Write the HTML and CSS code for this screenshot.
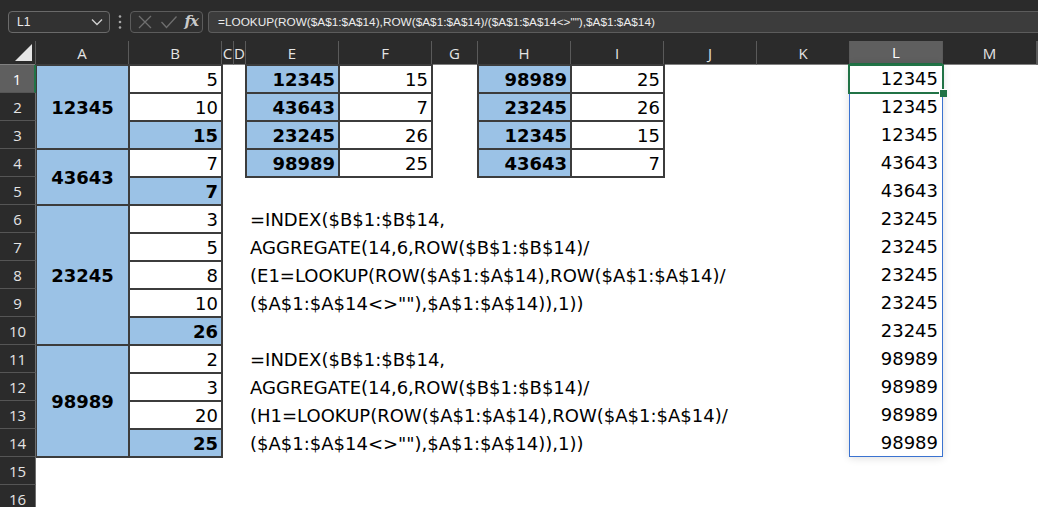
FILE: index.html
```html
<!DOCTYPE html>
<html lang="en">
<head>
    <meta charset="UTF-8">
    <meta name="viewport" content="width=device-width, initial-scale=1.0">
    <title>Book1 - Excel</title>
    <link rel="stylesheet" href="styles.css">
</head>
<body>
    <div class="toolbar">
        <div class="namebox">
            <span>L1</span>
            <svg width="12" height="8" viewBox="0 0 12 8"><path d="M1 1.5 L6 6.5 L11 1.5" fill="none" stroke="#cfcfcf" stroke-width="1.4"/></svg>
        </div>
        <div class="grip">
            <svg width="4" height="16" viewBox="0 0 4 16"><circle cx="2" cy="2.5" r="1.3" fill="#a8a8a8"/><circle cx="2" cy="8" r="1.3" fill="#a8a8a8"/><circle cx="2" cy="13.5" r="1.3" fill="#a8a8a8"/></svg>
        </div>
        <div class="fxbox">
            <svg width="16" height="16" viewBox="0 0 16 16"><path d="M2 2 L14 14 M14 2 L2 14" stroke="#6f6f6f" stroke-width="1.3"/></svg>
            <svg width="18" height="16" viewBox="0 0 18 16"><path d="M1.5 8 L6.5 13.5 L16.5 2.5" fill="none" stroke="#6f6f6f" stroke-width="1.3"/></svg>
            <span class="fx">fx</span>
        </div>
        <div class="formula">=LOOKUP(ROW($A$1:$A$14),ROW($A$1:$A$14)/($A$1:$A$14&lt;&gt;""),$A$1:$A$14)</div>
    </div>

    <div class="sheet">
        <div class="corner">
            <svg width="17" height="17" viewBox="0 0 17 17"><path d="M17 0 L17 17 L0 17 Z" fill="#e6e6e6"/></svg>
        </div>
        <div class="colhead">A</div>
        <div class="colhead">B</div>
        <div class="colhead">C</div>
        <div class="colhead">D</div>
        <div class="colhead">E</div>
        <div class="colhead">F</div>
        <div class="colhead">G</div>
        <div class="colhead">H</div>
        <div class="colhead">I</div>
        <div class="colhead">J</div>
        <div class="colhead">K</div>
        <div class="colhead sel">L</div>
        <div class="colhead">M</div>
        <div class="colhead"></div>

        <div class="rowhead sel">1</div>
        <div class="rowhead">2</div>
        <div class="rowhead">3</div>
        <div class="rowhead">4</div>
        <div class="rowhead">5</div>
        <div class="rowhead">6</div>
        <div class="rowhead">7</div>
        <div class="rowhead">8</div>
        <div class="rowhead">9</div>
        <div class="rowhead">10</div>
        <div class="rowhead">11</div>
        <div class="rowhead">12</div>
        <div class="rowhead">13</div>
        <div class="rowhead">14</div>
        <div class="rowhead">15</div>
        <div class="rowhead">16</div>

        <!-- A1:B14 groups with subtotals -->
        <div class="tbl tbl-ab">
            <div class="c blue b mid span3">12345</div>
            <div class="c">5</div>
            <div class="c">10</div>
            <div class="c blue b">15</div>
            <div class="c blue b mid span2">43643</div>
            <div class="c">7</div>
            <div class="c blue b">7</div>
            <div class="c blue b mid span5">23245</div>
            <div class="c">3</div>
            <div class="c">5</div>
            <div class="c">8</div>
            <div class="c">10</div>
            <div class="c blue b">26</div>
            <div class="c blue b mid span4">98989</div>
            <div class="c">2</div>
            <div class="c">3</div>
            <div class="c">20</div>
            <div class="c blue b">25</div>
        </div>

        <!-- E1:F4 -->
        <div class="tbl tbl-ef">
            <div class="c blue b">12345</div><div class="c">15</div>
            <div class="c blue b">43643</div><div class="c">7</div>
            <div class="c blue b">23245</div><div class="c">26</div>
            <div class="c blue b">98989</div><div class="c">25</div>
        </div>

        <!-- H1:I4 -->
        <div class="tbl tbl-hi">
            <div class="c blue b">98989</div><div class="c">25</div>
            <div class="c blue b">23245</div><div class="c">26</div>
            <div class="c blue b">12345</div><div class="c">15</div>
            <div class="c blue b">43643</div><div class="c">7</div>
        </div>

        <!-- formula notes in E6:E9 and E11:E14 -->
        <div class="note r6">=INDEX($B$1:$B$14,</div>
        <div class="note r7">AGGREGATE(14,6,ROW($B$1:$B$14)/</div>
        <div class="note r8">(E1=LOOKUP(ROW($A$1:$A$14),ROW($A$1:$A$14)/</div>
        <div class="note r9">($A$1:$A$14&lt;&gt;""),$A$1:$A$14)),1))</div>
        <div class="note r11">=INDEX($B$1:$B$14,</div>
        <div class="note r12">AGGREGATE(14,6,ROW($B$1:$B$14)/</div>
        <div class="note r13">(H1=LOOKUP(ROW($A$1:$A$14),ROW($A$1:$A$14)/</div>
        <div class="note r14">($A$1:$A$14&lt;&gt;""),$A$1:$A$14)),1))</div>

        <!-- spilled LOOKUP result -->
        <div class="spill">
            <div class="v">12345</div>
            <div class="v">12345</div>
            <div class="v">12345</div>
            <div class="v">43643</div>
            <div class="v">43643</div>
            <div class="v">23245</div>
            <div class="v">23245</div>
            <div class="v">23245</div>
            <div class="v">23245</div>
            <div class="v">23245</div>
            <div class="v">98989</div>
            <div class="v">98989</div>
            <div class="v">98989</div>
            <div class="v">98989</div>
        </div>
        <div class="active"></div>
    </div>
</body>
</html>
```

FILE: styles.css
```css
* {
    box-sizing: border-box;
}
body {
    margin: 0;
    background-color: #fff;
    font-family: "DejaVu Sans", sans-serif;
    overflow: hidden;
}

/* name box + formula bar */
.toolbar {
    height: 41px;
    background-color: #2b2b2b;
    display: flex;
    align-items: flex-start;
    padding: 11px 0 0 8px;
    font-family: "Liberation Sans", Arial, sans-serif;
    font-size: 12px;
    color: #ececec;
}
.namebox {
    width: 102px;
    height: 22px;
    border: 1px solid #6a6a6a;
    border-radius: 4px;
    background-color: #323232;
    display: flex;
    align-items: center;
    justify-content: space-between;
    padding: 0 6px 0 8px;
}
.grip {
    width: 20px;
    height: 22px;
    display: flex;
    align-items: center;
    justify-content: center;
}
.fxbox {
    width: 73px;
    height: 22px;
    border: 1px solid #5c5c5c;
    border-radius: 4px;
    background-color: #303030;
    display: flex;
    align-items: center;
    justify-content: space-between;
    padding: 0 4px 0 6px;
}
.fx {
    font-family: "DejaVu Serif", "Liberation Serif", serif;
    font-style: italic;
    font-weight: bold;
    font-size: 15px;
    color: #c9c9c9;
    letter-spacing: -1px;
    padding-bottom: 2px;
}
.formula {
    flex: 1;
    height: 22px;
    margin-left: 5px;
    border: 1px solid #5c5c5c;
    border-right: none;
    border-radius: 4px 0 0 4px;
    background-color: #3c3c3c;
    padding-left: 9px;
    display: flex;
    align-items: center;
    white-space: nowrap;
    font-size: 11.8px;
}

/* worksheet grid */
.sheet {
    display: grid;
    grid-template-columns: 36px 93px 93px 12px 12px 93px 93px 46px 93px 93px 93px 93px 93px 94px 1fr;
    grid-template-rows: 24px repeat(16, 28px);
    font-size: 18px;
    color: #000;
}
.corner, .colhead {
    background-color: #2b2b2b;
    border-right: 1px solid #5a5a5a;
    border-bottom: 1px solid #808080;
}
.corner {
    display: flex;
    align-items: flex-end;
    justify-content: flex-end;
    padding: 0 3px 3px 0;
}
.colhead, .rowhead {
    font-family: "Open Sans", sans-serif;
    font-size: 15px;
    color: #e4e4e4;
    display: flex;
    align-items: center;
    justify-content: center;
}
.rowhead {
    grid-column: 1;
    background-color: #2b2b2b;
    border-bottom: 1px solid #555;
    border-right: 1px solid #6e6e6e;
    position: relative;
    z-index: 1;
}
.colhead.sel {
    background-color: #5f5f5f;
    border-bottom: 2px solid #217346;
    color: #fff;
}
.rowhead.sel {
    background-color: #5f5f5f;
    border-right: 2px solid #217346;
    color: #fff;
}

/* bordered tables: the dark background shows through the gaps as cell borders */
.tbl {
    margin: -1px;
    display: grid;
    grid-template-columns: 1fr 1fr;
    gap: 2px;
    padding: 2px;
    background-color: #3c3c3c;
}
.tbl-ab {
    grid-column: 2 / 4;
    grid-row: 2 / 16;
    grid-template-rows: repeat(14, 1fr);
}
.tbl-ef {
    grid-column: 6 / 8;
    grid-row: 2 / 6;
    grid-template-rows: repeat(4, 1fr);
}
.tbl-hi {
    grid-column: 9 / 11;
    grid-row: 2 / 6;
    grid-template-rows: repeat(4, 1fr);
}
.c {
    background-color: #fff;
    display: flex;
    align-items: center;
    justify-content: flex-end;
    padding: 0 3px;
}
.blue {
    background-color: #9bc2e6;
}
.b {
    font-weight: bold;
}
.mid {
    justify-content: center;
}
.span2 { grid-row: span 2; }
.span3 { grid-row: span 3; }
.span4 { grid-row: span 4; }
.span5 { grid-row: span 5; }

.note {
    grid-column: 6;
    display: flex;
    align-items: center;
    padding-left: 4px;
    white-space: nowrap;
}
.r6 { grid-row: 7; }
.r7 { grid-row: 8; }
.r8 { grid-row: 9; }
.r9 { grid-row: 10; }
.r11 { grid-row: 12; }
.r12 { grid-row: 13; }
.r13 { grid-row: 14; }
.r14 { grid-row: 15; }

.spill {
    grid-column: 13;
    grid-row: 2 / 16;
    margin: -1px 0 0 -1px;
    border: 1px solid #3b73d0;
    box-shadow: 0 1px 8px rgba(0, 0, 0, 0.14);
    display: grid;
    grid-template-rows: repeat(14, 1fr);
    background-color: #fff;
}
.v {
    display: flex;
    align-items: center;
    justify-content: flex-end;
    padding-right: 4px;
}
.active {
    grid-column: 13;
    grid-row: 2;
    margin: -1px -1px -1px -2px;
    border: 2px solid #217346;
    position: relative;
    z-index: 2;
}
.active::after {
    content: "";
    position: absolute;
    right: -5px;
    bottom: -5px;
    width: 7px;
    height: 7px;
    background-color: #217346;
    border-left: 1px solid #fff;
    border-top: 1px solid #fff;
}
```
